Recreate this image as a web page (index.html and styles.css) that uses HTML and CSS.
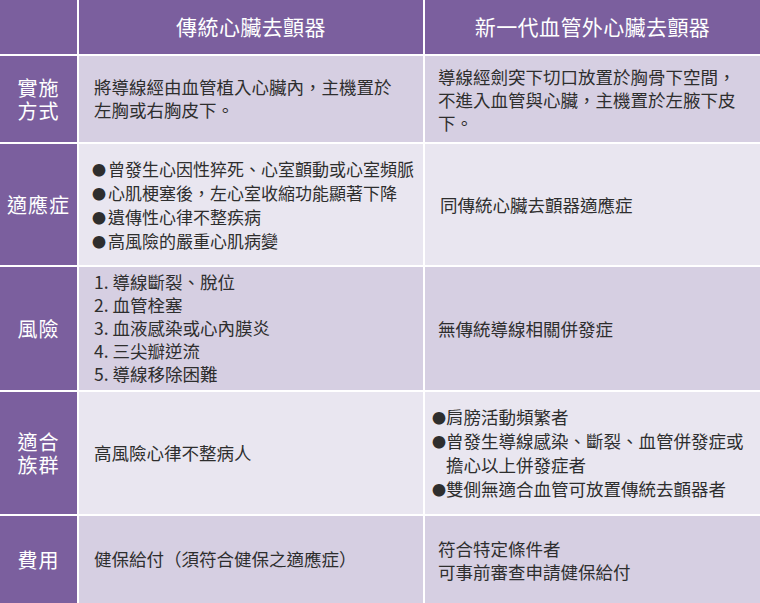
FILE: index.html
```html
<!DOCTYPE html>
<html lang="zh-Hant">
<head>
<meta charset="utf-8">
<link rel="stylesheet" href="styles.css">
</head>
<body>
<div class="table">
  <div class="cell head"></div>
  <div class="cell head title">傳統心臟去顫器</div>
  <div class="cell head title">新一代血管外心臟去顫器</div>

  <div class="cell label"><div>實施<br>方式</div></div>
  <div class="cell body odd c2"><div>將導線經由血管植入心臟內，主機置於<br>左胸或右胸皮下。</div></div>
  <div class="cell body odd c3"><div>導線經劍突下切口放置於胸骨下空間，<br>不進入血管與心臟，主機置於左腋下皮<br>下。</div></div>

  <div class="cell label"><div>適應症</div></div>
  <div class="cell body even c2b"><div><span class="bl"><span class="dot">●</span>曾發生心因性猝死、心室顫動或心室頻脈</span><span class="bl"><span class="dot">●</span>心肌梗塞後，左心室收縮功能顯著下降</span><span class="bl"><span class="dot">●</span>遺傳性心律不整疾病</span><span class="bl"><span class="dot">●</span>高風險的嚴重心肌病變</span></div></div>
  <div class="cell body even c3b"><div>同傳統心臟去顫器適應症</div></div>

  <div class="cell label"><div>風險</div></div>
  <div class="cell body odd c2"><div>1. 導線斷裂、脫位<br>2. 血管栓塞<br>3. 血液感染或心內膜炎<br>4. 三尖瓣逆流<br>5. 導線移除困難</div></div>
  <div class="cell body odd c3"><div>無傳統導線相關併發症</div></div>

  <div class="cell label"><div>適合<br>族群</div></div>
  <div class="cell body even c2"><div>高風險心律不整病人</div></div>
  <div class="cell body even c3l"><div><span class="bl"><span class="dot dot3">●</span>肩膀活動頻繁者</span><span class="bl"><span class="dot dot3">●</span>曾發生導線感染、斷裂、血管併發症或</span><span class="bl ind">擔心以上併發症者</span><span class="bl"><span class="dot dot3">●</span>雙側無適合血管可放置傳統去顫器者</span></div></div>

  <div class="cell label"><div>費用</div></div>
  <div class="cell body odd c2"><div>健保給付（須符合健保之適應症）</div></div>
  <div class="cell body odd c3"><div>符合特定條件者<br>可事前審查申請健保給付</div></div>
</div>
</body>
</html>
```

FILE: styles.css
```css
html, body {
  margin: 0;
  padding: 0;
  background: #ffffff;
}
body {
  font-family: "Noto Sans CJK TC", "Noto Sans", sans-serif;
}
.table {
  display: grid;
  grid-template-columns: 77px 344px 335px;
  grid-template-rows: 54px 86px 121px 123px 122px 87px;
  column-gap: 2px;
  row-gap: 2px;
  width: 760px;
  height: 603px;
  background: #ffffff;
}
.cell {
  display: flex;
  align-items: center;
  white-space: nowrap;
}
.head {
  background: #7b5f9e;
  color: #ffffff;
}
.title {
  justify-content: center;
  font-size: 21px;
  letter-spacing: 0.4px;
  padding-bottom: 3px;
}
.label {
  background: #7b5f9e;
  color: #ffffff;
  justify-content: center;
  text-align: center;
  font-size: 20px;
  line-height: 23px;
  letter-spacing: 1px;
}
.body {
  color: #2e2e2e;
  font-size: 17.5px;
  line-height: 23px;
}
.odd {
  background: #d6cfe2;
}
.even {
  background: #e9e6f0;
}
.c2 {
  padding-left: 15px;
  padding-bottom: 2px;
}
.c2b {
  padding-left: 13px;
  font-size: 17px;
}
.c3 {
  padding-left: 13px;
}
.c3b {
  padding-left: 15px;
}
.c3l {
  padding-left: 7px;
  line-height: 24px;
}
.bl {
  display: block;
}
.ind {
  padding-left: 14px;
}
.dot {
  display: inline-block;
  width: 16px;
  font-size: 14px;
  vertical-align: 1px;
}
.dot3 {
  width: 14px;
}
```
